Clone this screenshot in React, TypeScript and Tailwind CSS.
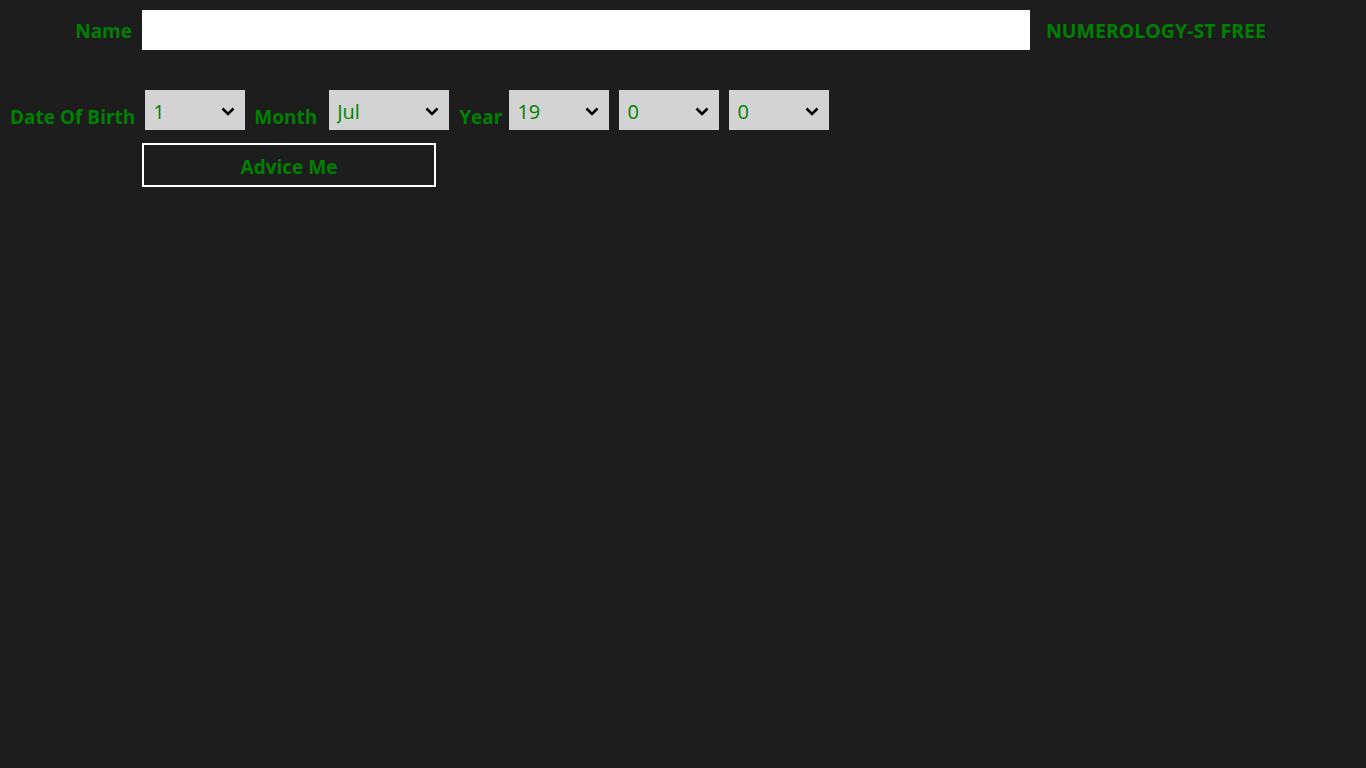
import { useState } from 'react';

const labelCls = 'text-[#008000] font-bold text-[19px] leading-[24px]';

function Chevron() {
  return (
    <svg width="14" height="9" viewBox="0 0 14 9" className="pointer-events-none absolute right-[10px] top-[17px]">
      <polyline points="1.5,1.5 7,7 12.5,1.5" fill="none" stroke="#000" strokeWidth="2.6" />
    </svg>
  );
}

function Dropdown({
  value,
  options,
  width,
  onChange,
}: {
  value: string;
  options: string[];
  width: string;
  onChange: (v: string) => void;
}) {
  return (
    <div className={`relative h-10 ${width}`}>
      <select
        value={value}
        onChange={(e) => onChange(e.target.value)}
        className="h-10 w-full appearance-none rounded-none bg-[#d3d3d3] pl-[8px] pr-8 pt-[3px] text-[20px] text-[#008000] outline-none"
      >
        {options.map((o) => (
          <option key={o} value={o}>
            {o}
          </option>
        ))}
      </select>
      <Chevron />
    </div>
  );
}

const days = Array.from({ length: 31 }, (_, i) => String(i + 1));
const months = ['Jan', 'Feb', 'Mar', 'Apr', 'May', 'Jun', 'Jul', 'Aug', 'Sep', 'Oct', 'Nov', 'Dec'];
const centuries = ['18', '19', '20'];
const digits = Array.from({ length: 10 }, (_, i) => String(i));

export default function App() {
  const [name, setName] = useState('');
  const [day, setDay] = useState('1');
  const [month, setMonth] = useState('Jul');
  const [century, setCentury] = useState('19');
  const [tens, setTens] = useState('0');
  const [ones, setOnes] = useState('0');

  return (
    <div
      className="min-h-screen w-full bg-[#1d1d1d]"
      style={{ fontFamily: '"Open Sans", "Noto Sans", sans-serif' }}
    >
      <div className="flex items-center pt-[10px]">
        <div className="w-[132px] pt-[2px] text-right">
          <span className={labelCls}>Name</span>
        </div>
        <input
          value={name}
          onChange={(e) => setName(e.target.value)}
          className="ml-[10px] h-10 w-[888px] bg-white px-2 text-[18px] text-black outline-none"
        />
        <span className="ml-4 pt-[2px] text-[19.5px] font-bold text-[#008000]">NUMEROLOGY-ST FREE</span>
      </div>

      <div className="mt-10 flex items-end pl-[10px]">
        <span className={`${labelCls} mb-[1px]`}>Date Of Birth</span>
        <div className="ml-[10px]">
          <Dropdown value={day} options={days} width="w-[100px]" onChange={setDay} />
        </div>
        <span className={`${labelCls} mb-[1px] ml-[9px]`}>Month</span>
        <div className="ml-[12px]">
          <Dropdown value={month} options={months} width="w-[120px]" onChange={setMonth} />
        </div>
        <span className={`${labelCls} mb-[1px] ml-[10px]`}>Year</span>
        <div className="ml-[7px] flex gap-[10px]">
          <Dropdown value={century} options={centuries} width="w-[100px]" onChange={setCentury} />
          <Dropdown value={tens} options={digits} width="w-[100px]" onChange={setTens} />
          <Dropdown value={ones} options={digits} width="w-[100px]" onChange={setOnes} />
        </div>
      </div>

      <div className="mt-[13px] pl-[142px]">
        <button className="h-[44px] w-[294px] border-2 border-white pt-[4px] text-[19px] font-bold text-[#008000]">
          Advice Me
        </button>
      </div>
    </div>
  );
}
